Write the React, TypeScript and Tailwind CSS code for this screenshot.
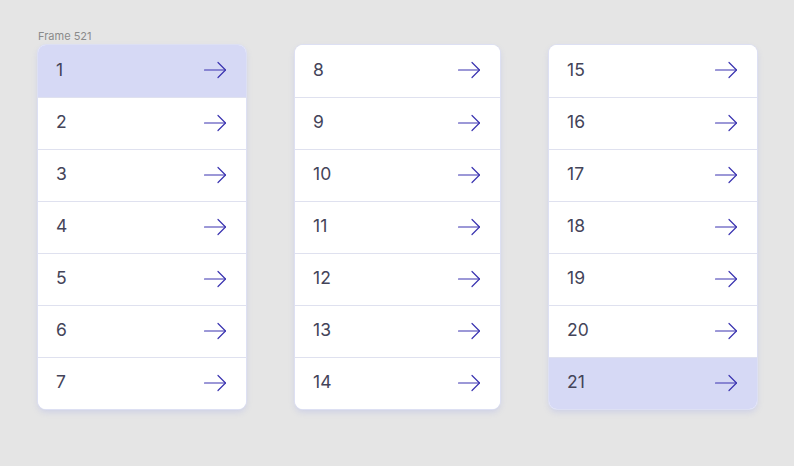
import React from "react";

const Arrow = () => (
  <svg width="24" height="18" viewBox="0 0 24 18" fill="none" stroke="#3a33b0" strokeWidth="1.2" strokeLinecap="round" strokeLinejoin="round" className="-mt-[2px]">
    <path d="M1.5 9h21" />
    <path d="M15 1.5l7.5 7.5-7.5 7.5" />
  </svg>
);

type ColProps = { nums: number[]; width: string; active: number };

const Column = ({ nums, width, active }: ColProps) => (
  <div className={`${width} rounded-lg bg-white overflow-hidden shadow-[0_3px_6px_rgba(120,130,230,0.22)] ring-1 ring-[#dde0f3]`}>
    {nums.map((n, i) => (
      <div
        key={n}
        className={`h-[52px] flex items-center justify-between pl-[18px] pr-[19px] ${i > 0 ? "border-t border-[#dfe1ef]" : ""} ${n === active ? "bg-[#d6d9f5]" : "bg-white"}`}
      >
        <span className="text-[17.5px] text-[#444459] font-['Inter',sans-serif] tracking-[0.2px] -mt-[2px]">{n}</span>
        <Arrow />
      </div>
    ))}
  </div>
);

export default function App() {
  return (
    <div className="w-[794px] h-[466px] bg-[#e5e5e5] font-['Inter',sans-serif] pt-[29px] pl-[38px]">
      <div className="text-[11px] leading-[14px] text-[#8a8a8a] mb-[2px]">Frame 521</div>
      <div className="flex">
        <Column nums={[1, 2, 3, 4, 5, 6, 7]} width="w-[208px]" active={1} />
        <div className="ml-[49px]">
          <Column nums={[8, 9, 10, 11, 12, 13, 14]} width="w-[205px]" active={-1} />
        </div>
        <div className="ml-[49px]">
          <Column nums={[15, 16, 17, 18, 19, 20, 21]} width="w-[208px]" active={21} />
        </div>
      </div>
    </div>
  );
}
